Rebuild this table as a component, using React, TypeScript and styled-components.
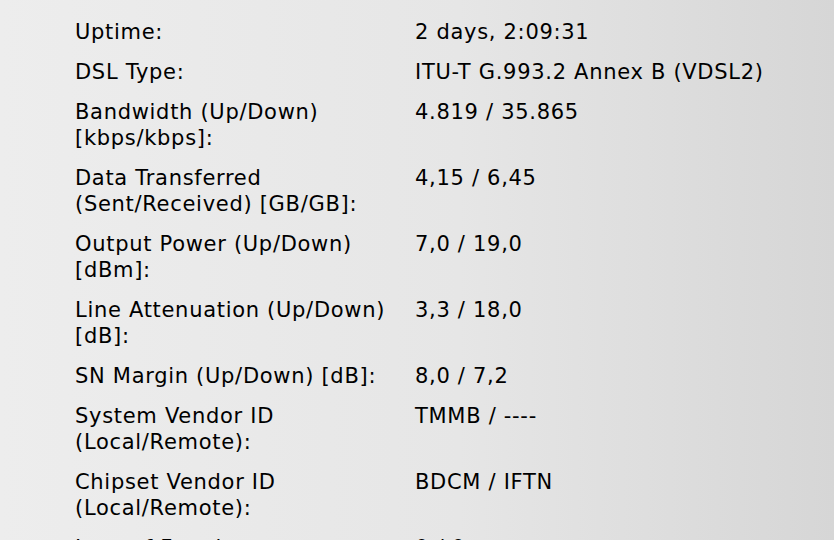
import * as React from 'react'
import styled, { createGlobalStyle } from 'styled-components'

const GlobalStyle = createGlobalStyle`
  html, body {
    margin: 0;
    padding: 0;
  }
  body {
    width: 834px;
    height: 540px;
    overflow: hidden;
    background: linear-gradient(to right, #ededed 0%, #e6e6e6 55%, #d6d6d6 100%);
  }
`

const Page = styled.div`
  padding: 19px 0 0 75px;
  font-family: 'DejaVu Sans', Verdana, sans-serif;
  font-size: 21px;
  letter-spacing: 0.7px;
  line-height: 26px;
  color: #000;
`

const StatusGrid = styled.dl`
  display: grid;
  grid-template-columns: 340px auto;
  row-gap: 14px;
  margin: 0;
`

const Label = styled.dt`
  margin: 0;
  white-space: nowrap;
`

const Value = styled.dd`
  margin: 0;
  white-space: nowrap;
`

const rows: { label: string[]; value: string }[] = [
  { label: ['Uptime:'], value: '2 days, 2:09:31' },
  { label: ['DSL Type:'], value: 'ITU-T G.993.2 Annex B (VDSL2)' },
  { label: ['Bandwidth (Up/Down)', '[kbps/kbps]:'], value: '4.819 / 35.865' },
  { label: ['Data Transferred', '(Sent/Received) [GB/GB]:'], value: '4,15 / 6,45' },
  { label: ['Output Power (Up/Down)', '[dBm]:'], value: '7,0 / 19,0' },
  { label: ['Line Attenuation (Up/Down)', '[dB]:'], value: '3,3 / 18,0' },
  { label: ['SN Margin (Up/Down) [dB]:'], value: '8,0 / 7,2' },
  { label: ['System Vendor ID', '(Local/Remote):'], value: 'TMMB / ----' },
  { label: ['Chipset Vendor ID', '(Local/Remote):'], value: 'BDCM / IFTN' },
  { label: ['Loss of Framing', '(Local/Remote):'], value: '0 / 0' },
]

export default function App() {
  return (
    <>
      <GlobalStyle />
      <Page>
        <StatusGrid>
          {rows.map(r => (
            <React.Fragment key={r.label[0]}>
              <Label>
                {r.label.map((line, i) => (
                  <React.Fragment key={i}>
                    {i > 0 && <br />}
                    {line}
                  </React.Fragment>
                ))}
              </Label>
              <Value>{r.value}</Value>
            </React.Fragment>
          ))}
        </StatusGrid>
      </Page>
    </>
  )
}
